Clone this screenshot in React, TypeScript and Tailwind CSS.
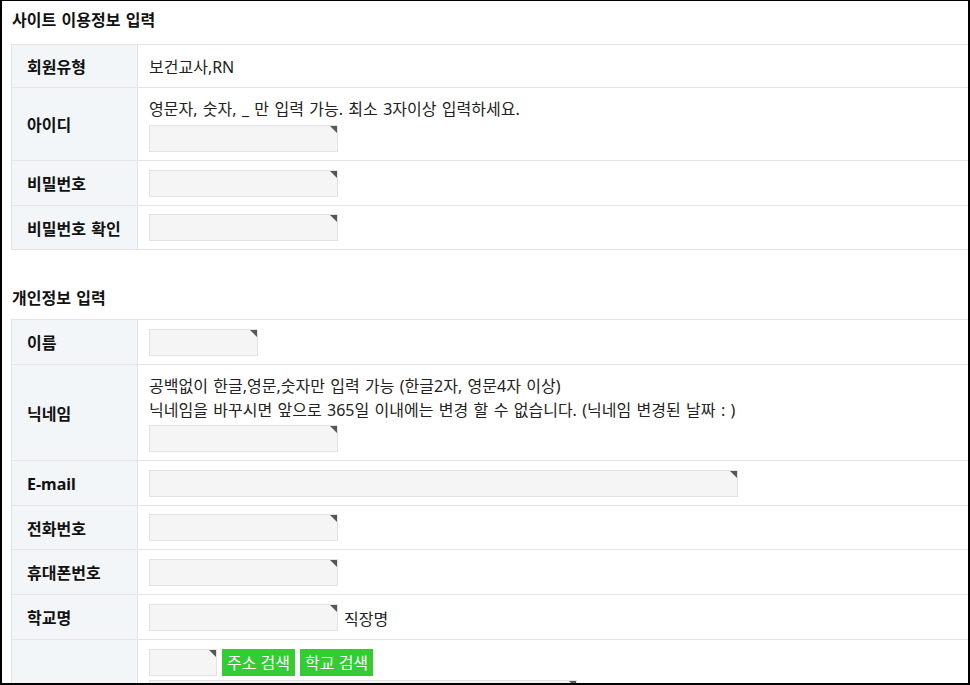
import type { ReactNode } from 'react';

function Field({ w = 'w-[189px]' }: { w?: string }) {
  return (
    <span className={`relative inline-block h-[27px] shrink-0 ${w}`}>
      <input
        readOnly
        className="block h-full w-full border border-[#e2e2e2] bg-[#f5f5f5] outline-none"
      />
      <svg className="absolute right-[1px] top-[1px]" width="7" height="7" viewBox="0 0 7 7">
        <polygon points="0,0 7,0 7,7" fill="#575a4f" />
      </svg>
    </span>
  );
}

function Row({ label, children, last }: { label: string; children: ReactNode; last?: boolean }) {
  return (
    <div className={`flex ${last ? '' : 'border-b border-[#e4e4e4]'}`}>
      <div className="flex w-[126px] shrink-0 items-center border-r border-[#e4e4e4] bg-[#f3f6f8] pl-[15px] pt-[2px] font-bold text-[#111]">
        {label}
      </div>
      <div className="flex min-h-[42px] flex-1 flex-col justify-center px-[11px] pb-[8px] pt-[8px]">
        {children}
      </div>
    </div>
  );
}

function Title({ children, className }: { children: ReactNode; className: string }) {
  return <div className={`h-[24px] pl-[10px] font-bold leading-[24px] text-[#111] ${className}`}>{children}</div>;
}

export default function App() {
  return (
    <div className="h-[685px] w-[970px] overflow-hidden border-b-2 border-l-2 border-r-2 border-t border-black bg-white font-['Noto_Sans','Noto_Sans_CJK_KR',sans-serif] text-[16px] leading-[24px] text-[#222] [word-spacing:1.2px]">
      <Title className="mb-[12px] mt-[7px]">사이트 이용정보 입력</Title>
      <div className="ml-[9px] mr-[-20px] border-l border-t border-[#e4e4e4]">
        <Row label="회원유형">
          <div className="pt-[2px]">보건교사,RN</div>
        </Row>
        <Row label="아이디">
          <div className="pt-[1px]">영문자, 숫자, _ 만 입력 가능. 최소 3자이상 입력하세요.</div>
          <div className="mt-[4px] flex">
            <Field />
          </div>
        </Row>
        <Row label="비밀번호">
          <div className="flex pt-[1px]">
            <Field />
          </div>
        </Row>
        <Row label="비밀번호 확인">
          <div className="flex">
            <Field />
          </div>
        </Row>
      </div>

      <Title className="mb-[9px] mt-[36px]">개인정보 입력</Title>
      <div className="ml-[9px] mr-[-20px] border-l border-t border-[#e4e4e4]">
        <Row label="이름">
          <div className="flex pt-[1px]">
            <Field w="w-[109px]" />
          </div>
        </Row>
        <Row label="닉네임">
          <div className="pt-[1px]">공백없이 한글,영문,숫자만 입력 가능 (한글2자, 영문4자 이상)</div>
          <div>닉네임을 바꾸시면 앞으로 365일 이내에는 변경 할 수 없습니다. (닉네임 변경된 날짜 : )</div>
          <div className="mt-[3px] flex">
            <Field />
          </div>
        </Row>
        <Row label="E-mail">
          <div className="flex pt-[1px]">
            <Field w="w-[589px]" />
          </div>
        </Row>
        <Row label="전화번호">
          <div className="flex">
            <Field />
          </div>
        </Row>
        <Row label="휴대폰번호">
          <div className="flex pt-[1px]">
            <Field />
          </div>
        </Row>
        <Row label="학교명">
          <div className="flex items-center gap-[6px] pt-[1px]">
            <Field />
            <span className="pt-[2px]">직장명</span>
          </div>
        </Row>
        <Row label="" last>
          <div className="flex items-center gap-[5px] pt-[1px]">
            <Field w="w-[68px]" />
            <button className="h-[27px] bg-[#33cc33] px-[5px] pt-[1px] leading-[27px] text-white">주소 검색</button>
            <button className="h-[27px] bg-[#33cc33] px-[5px] pt-[1px] leading-[27px] text-white">학교 검색</button>
          </div>
          <div className="mt-[4px] flex">
            <Field w="w-[428px]" />
          </div>
        </Row>
      </div>
    </div>
  );
}
